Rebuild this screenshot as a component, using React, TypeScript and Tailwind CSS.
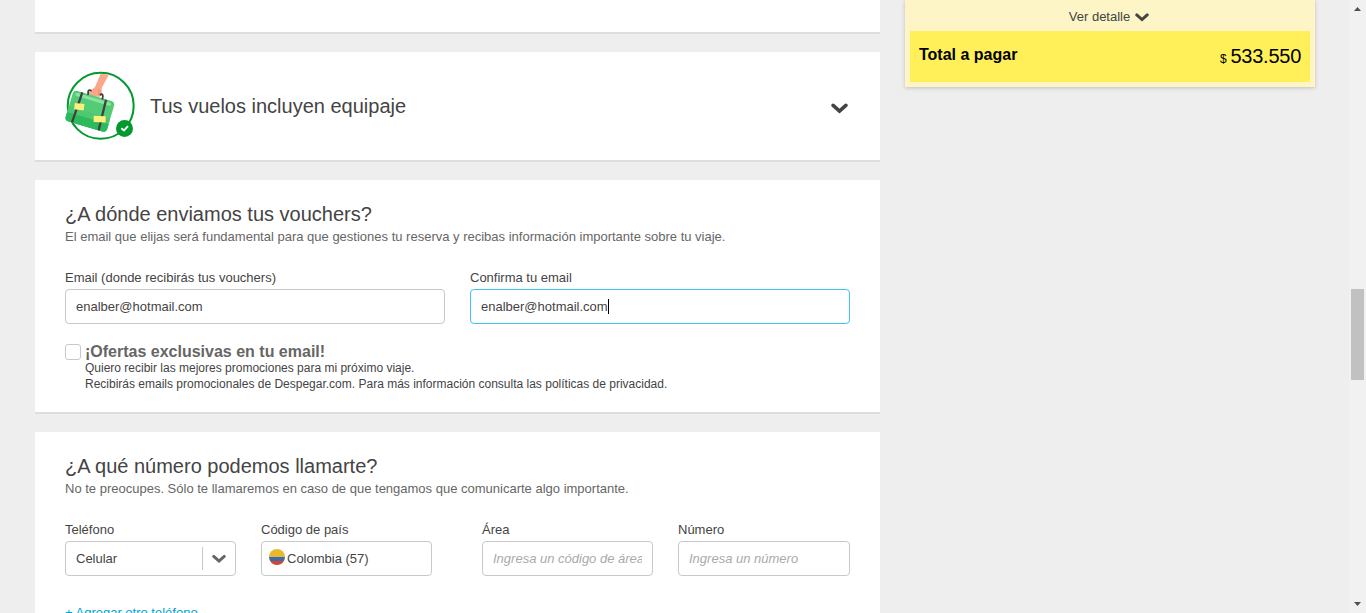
import React from "react";

type FieldProps = {
  label: string;
  width: string;
  children?: React.ReactNode;
  focused?: boolean;
};

function Field({ label, width, children, focused }: FieldProps) {
  return (
    <div className={`${width} shrink-0`}>
      <div className="h-[19px] text-[13px] leading-[16px] text-[#444] whitespace-nowrap">{label}</div>
      <div
        className={`flex h-[35px] items-center rounded-[4px] border bg-white text-[13px] text-[#444] ${
          focused ? "border-[#3ec4ec]" : "border-[#c9c9c9]"
        }`}
      >
        {children}
      </div>
    </div>
  );
}

function Chevron({ className }: { className?: string }) {
  return (
    <svg viewBox="0 0 16 10" className={className} fill="none" stroke="currentColor" strokeWidth="3.4" strokeLinecap="round" strokeLinejoin="miter">
      <path d="M2 2 L8 7.4 L14 2" />
    </svg>
  );
}

function Luggage() {
  return (
    <svg viewBox="0 0 100 90" className="h-[90px] w-[100px] shrink-0">
      <circle cx="50.7" cy="45.8" r="33" fill="#fff" stroke="#02992f" strokeWidth="2" />
      <path d="M50.5 14 L59 14.4 L51.7 28 L51.9 35 L49 37 L42 36 L38.5 33.5 L41.5 30 L45 27 Z" fill="#f9a98a" />
      <path d="M49 29 L48.5 35 M42 36 L45.5 37" stroke="#ef8c70" strokeWidth="1" fill="none" />
      <g transform="translate(23.7 29.9) rotate(16.5)">
        <rect x="0" y="0" width="43.2" height="31.8" rx="4" fill="#54cc76" />
        <path d="M0 17 H43.2 V27.8 a4 4 0 0 1 -4 4 H4 a4 4 0 0 1 -4 -4Z" fill="#4dc871" />
        <path d="M0 23 H43.2 V27.8 a4 4 0 0 1 -4 4 H4 a4 4 0 0 1 -4 -4Z" fill="#2cba5b" />
        <rect x="3" y="2" width="37" height="3" rx="1.5" fill="#8be3a1" />
        <path d="M9 0 L7.6 31.6 M33.8 .2 L35.4 31.6" stroke="#414042" strokeWidth="2.3" />
        <rect x="5.3" y="11.3" width="9.6" height="6.4" fill="#fdef7c" transform="rotate(-10 10 14.4)" />
        <rect x="27.2" y="17.6" width="12" height="6.2" fill="#fdef7c" transform="rotate(-15 33 20.6)" />
      </g>
      <path d="M38.3 35 C37.6 30.6 38.6 29.2 41.6 30.8 M52.4 39.6 C53.7 34.6 52.4 33.4 49.7 34.8" fill="none" stroke="#414042" strokeWidth="1.9" />
      <circle cx="74.5" cy="68.5" r="8.5" fill="#02992f" />
      <path d="M71.3 68.3 L74 70.5 L78 66.1" fill="none" stroke="#fff" strokeWidth="1.9" />
    </svg>
  );
}

function Flag() {
  return (
    <svg viewBox="0 0 16 16" className="mr-[2px] mt-[-3px] h-4 w-4 shrink-0">
      <defs>
        <clipPath id="disc"><circle cx="8" cy="8" r="8" /></clipPath>
      </defs>
      <g clipPath="url(#disc)">
        <rect width="16" height="8" fill="#e6b92f" />
        <rect y="8" width="16" height="4" fill="#3b6ca8" />
        <rect y="12" width="16" height="4" fill="#cf4638" />
      </g>
    </svg>
  );
}

export default function App() {
  return (
    <div className="flex h-[613px] w-[1366px] overflow-hidden bg-[#eee] font-['Liberation_Sans',Arial,sans-serif] text-[#444]">
      <main className="ml-[35px] flex w-[845px] shrink-0 flex-col gap-[18px]">
        <section className="h-[34px] shrink-0 border-b-2 border-[#ddd] bg-white" />

        <section className="flex h-[110px] shrink-0 items-start border-b-2 border-[#ddd] bg-white">
          <div className="ml-[15px] mt-[8px]"><Luggage /></div>
          <h2 className="mt-[42px] text-[20px] leading-[24px] whitespace-nowrap">Tus vuelos incluyen equipaje</h2>
          <Chevron className="ml-auto mr-[32px] mt-[51px] h-[11px] w-[17px] text-[#444]" />
        </section>

        <section className="h-[234px] shrink-0 border-b-2 border-[#ddd] bg-white px-[30px] pt-[22px]">
          <h2 className="text-[20px] leading-[24px] whitespace-nowrap">¿A dónde enviamos tus vouchers?</h2>
          <p className="mt-[3px] text-[13px] leading-[16px] text-[#666] whitespace-nowrap">
            El email que elijas será fundamental para que gestiones tu reserva y recibas información importante sobre tu viaje.
          </p>
          <div className="mt-[25px] flex gap-[25px]">
            <Field label="Email (donde recibirás tus vouchers)" width="w-[380px]">
              <span className="ml-[10px]">enalber@hotmail.com</span>
            </Field>
            <Field label="Confirma tu email" width="w-[380px]" focused>
              <span className="ml-[10px]">enalber@hotmail.com</span>
              <span className="h-[15px] w-px bg-black" />
            </Field>
          </div>
          <div className="mt-[20px] flex">
            <span className="h-4 w-4 shrink-0 rounded-[3px] border border-[#c9c9c9] bg-white" />
            <div className="ml-[4px] text-[12px] leading-[16px] whitespace-nowrap">
              <div className="text-[16px] font-bold text-[#666]">¡Ofertas exclusivas en tu email!</div>
              <div>Quiero recibir las mejores promociones para mi próximo viaje.</div>
              <div>Recibirás emails promocionales de Despegar.com. Para más información consulta las políticas de privacidad.</div>
            </div>
          </div>
        </section>

        <section className="h-[234px] shrink-0 bg-white px-[30px] pt-[22px]">
          <h2 className="text-[20px] leading-[24px] whitespace-nowrap">¿A qué número podemos llamarte?</h2>
          <p className="mt-[3px] text-[13px] leading-[16px] text-[#666] whitespace-nowrap">
            No te preocupes. Sólo te llamaremos en caso de que tengamos que comunicarte algo importante.
          </p>
          <div className="mt-[25px] flex">
            <Field label="Teléfono" width="w-[171px]">
              <span className="ml-[10px]">Celular</span>
              <span className="ml-auto h-[23px] w-px bg-[#c9c9c9]" />
              <Chevron className="ml-[9px] mr-[9px] h-[10px] w-[14px] text-[#666]" />
            </Field>
            <div className="w-[25px] shrink-0" />
            <Field label="Código de país" width="w-[171px]">
              <span className="ml-[7px] flex items-center"><Flag />Colombia (57)</span>
            </Field>
            <div className="w-[50px] shrink-0" />
            <Field label="Área" width="w-[171px]">
              <span className="mx-[10px] w-[149px] overflow-hidden italic text-[#aaa] whitespace-nowrap">Ingresa un código de área</span>
            </Field>
            <div className="w-[25px] shrink-0" />
            <Field label="Número" width="w-[172px]">
              <span className="ml-[10px] italic text-[#aaa]">Ingresa un número</span>
            </Field>
          </div>
          <div className="mt-[29px] text-[13px] leading-[16px] text-[#00a3da] whitespace-nowrap">+ Agregar otro teléfono</div>
        </section>
      </main>

      <aside className="ml-[25px] h-[87px] w-[410px] shrink-0 bg-[#fdf5c5] px-[5px] shadow-[0_1px_4px_rgba(0,0,0,0.2)]">
        <div className="flex h-[31px] items-start justify-center pr-[2px] pt-[9px] text-[13px] leading-[16px]">
          Ver detalle
          <Chevron className="ml-[5px] mt-[4px] h-[9px] w-[14px] text-[#444]" />
        </div>
        <div className="flex h-[51px] justify-between bg-[#fff059] pl-[9px] pr-[9px] text-black">
          <span className="mt-[14px] text-[16px] leading-[20px] font-bold">Total a pagar</span>
          <span className="mt-[13px] text-[20px] leading-[24px] tracking-[-0.25px]"><span className="mr-[4px] text-[12px]">$</span>533.550</span>
        </div>
      </aside>

      <div className="ml-auto flex w-[17px] shrink-0 flex-col items-center bg-[#f1f1f1]">
        <svg viewBox="0 0 7 4" className="mt-[7px] h-[4px] w-[7px]" fill="#505050"><path d="M0 4 L3.5 0 L7 4Z" /></svg>
        <div className="mt-[278px] h-[91px] w-[13px] bg-[#c1c1c1]" />
        <svg viewBox="0 0 7 4" className="mb-[7px] mt-auto h-[4px] w-[7px]" fill="#505050"><path d="M0 0 L3.5 4 L7 0Z" /></svg>
      </div>
    </div>
  );
}
